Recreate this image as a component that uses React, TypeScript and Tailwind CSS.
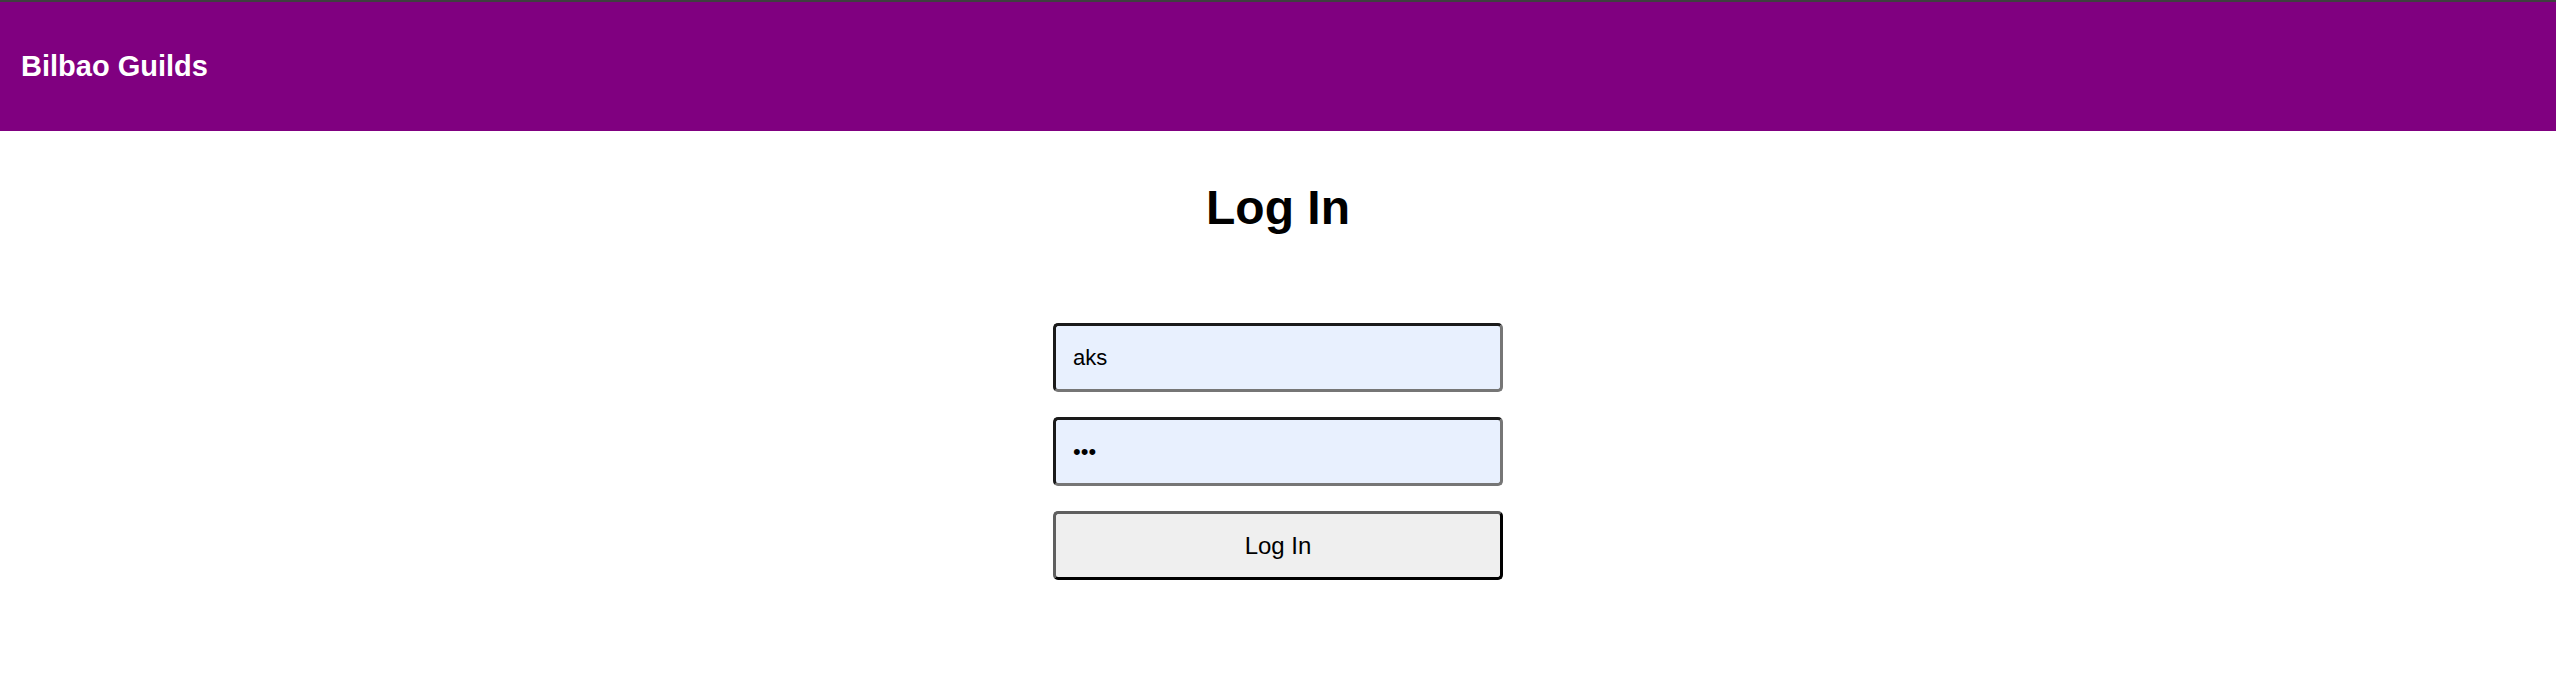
export default function App() {
  return (
    <div className="min-h-screen bg-white font-['Liberation_Sans',Arial,sans-serif] text-black">
      {/* Header */}
      <header className="h-[131px] border-t-2 border-[#3f3f3f] bg-[#800080] flex items-center px-[21px]">
        <h2 className="text-[29px] font-bold text-white leading-none">Bilbao Guilds</h2>
      </header>

      {/* Login form */}
      <main className="flex flex-col items-center">
        <h1 className="mt-[49px] text-[48px] font-bold leading-[55px]">Log In</h1>
        <form className="mt-[88px] flex flex-col gap-[25px] w-[450px]" onSubmit={(e) => e.preventDefault()}>
          <input
            type="text"
            defaultValue="aks"
            className="h-[69px] w-full rounded-[5px] border-[3px] border-t-[#1a1a1a] border-l-[#1a1a1a] border-r-[#767676] border-b-[#767676] bg-[#e8f0fe] px-[17px] text-[22px] outline-none"
          />
          <input
            type="password"
            defaultValue="abc"
            className="h-[69px] w-full rounded-[5px] border-[3px] border-t-[#1a1a1a] border-l-[#1a1a1a] border-r-[#767676] border-b-[#767676] bg-[#e8f0fe] px-[17px] text-[22px] outline-none"
          />
          <button
            type="submit"
            className="h-[69px] w-full rounded-[5px] border-[3px] border-t-[#5f5f5f] border-l-[#5f5f5f] border-r-black border-b-black bg-[#efefef] text-[24px]"
          >
            Log In
          </button>
        </form>
      </main>
    </div>
  )
}
